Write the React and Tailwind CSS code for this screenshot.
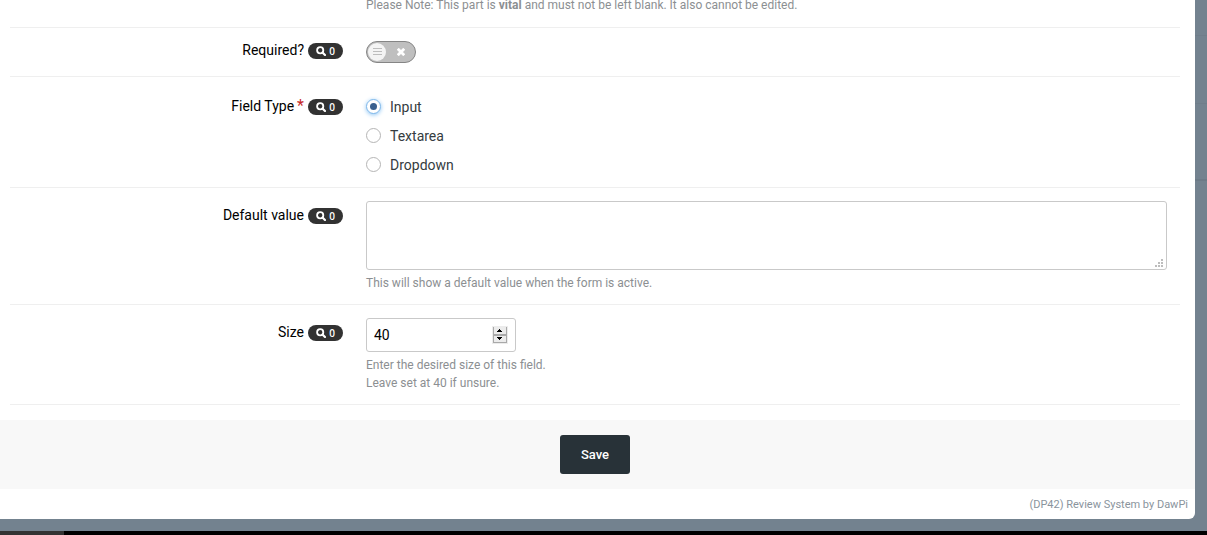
import React, { useState } from 'react';
import clsx from 'clsx';

const FIELD_TYPES = ['Input', 'Textarea', 'Dropdown'];

/**
 * Dark pill with the search icon and the number of matches
 */
const SearchBadge = ({ count = 0 }) => (
    <span className="mt-[3px] flex h-4 w-[35px] items-center justify-center gap-[3px] rounded-full bg-[#323232] text-white">
        <svg className="h-2.5 w-2.5" viewBox="0 0 10 10" fill="none" stroke="currentColor" strokeWidth="1.8">
            <circle cx="4.2" cy="4.2" r="3.1" />
            <path d="M6.5 6.5 9 9" strokeWidth="2.2" strokeLinecap="round" />
        </svg>
        <span className="font-[Open_Sans,sans-serif] text-[10px] leading-4 font-semibold">{count}</span>
    </span>
);

const HelpText = ({ children }) => (
    <p className="text-xs leading-[18px] text-[#8c8f92]">{children}</p>
);

/**
 * One line of the form
 *
 * @param {Object} props
 * @param {string} props.label - Field label
 * @param {string} props.htmlFor - Id of the labelled control
 * @param {boolean} props.required - Shows the red asterisk
 * @param {string} props.labelClassName - Top padding of the label
 * @param {string} props.className - Padding of the row content
 */
const FormRow = ({ label, htmlFor, id, required = false, labelClassName, className, children }) => {
    const Tag = htmlFor ? 'label' : 'span';

    return (
        <div className="flex gap-[23px] border-b border-[#efefef]">
            <div className={clsx('flex w-[333px] shrink-0 items-start justify-end gap-1', labelClassName)}>
                {label && (
                    <>
                        <Tag htmlFor={htmlFor} id={id} className="flex gap-[3px] text-sm leading-5 text-black">
                            {label}
                            {required && <span className="text-base leading-5 text-[#c62828]">*</span>}
                        </Tag>
                        <SearchBadge />
                    </>
                )}
            </div>
            <div className={clsx('min-w-0 flex-1 pr-[13px]', className)}>{children}</div>
        </div>
    );
};

const Toggle = ({ id, checked, onChange }) => (
    <div className="relative h-[22px] w-[50px]">
        <input
            id={id}
            type="checkbox"
            role="switch"
            checked={checked}
            onChange={onChange}
            className="block h-full w-full appearance-none rounded-full border border-[#858585] bg-[#bfbfbf] checked:bg-[#5d8a3a]"
        />
        <span
            className={clsx(
                'pointer-events-none absolute top-0.5 flex h-[18px] w-[18px] items-center justify-center rounded-full bg-[#f4f4f4]',
                checked ? 'right-0.5' : 'left-0.5'
            )}
        >
            <svg className="h-2 w-[9px]" viewBox="0 0 9 8" stroke="#bdbdbd">
                <path d="M0 .5h9M0 3.5h9M0 6.5h9" />
            </svg>
        </span>
        {!checked && (
            <svg
                className="pointer-events-none absolute top-[7px] left-[31px] h-2 w-2"
                viewBox="0 0 8 8"
                stroke="#fff"
                strokeWidth="2.8"
            >
                <path d="M.8 .8l6.4 6.4M7.2 .8.8 7.2" />
            </svg>
        )}
    </div>
);

const App = () => {
    const [required, setRequired] = useState(false);
    const [fieldType, setFieldType] = useState('Input');
    const [defaultValue, setDefaultValue] = useState('');
    const [size, setSize] = useState(40);

    return (
        <div className="flex min-h-screen flex-col bg-[#73828f] font-[Roboto,sans-serif]">
            <div className="flex">
                <form
                    className="min-w-0 flex-1 overflow-hidden rounded-br-md bg-white"
                    onSubmit={(e) => e.preventDefault()}
                >
                    <div className="mr-[15px] mb-[15px] ml-2.5">
                        <FormRow className="flex h-[27px] flex-col justify-end pb-[13px]">
                            <HelpText>
                                Please Note: This part is <b>vital</b> and must not be left blank. It also cannot be
                                edited.
                            </HelpText>
                        </FormRow>

                        <FormRow label="Required?" htmlFor="required" labelClassName="pt-3" className="py-[13px]">
                            <Toggle id="required" checked={required} onChange={(e) => setRequired(e.target.checked)} />
                        </FormRow>

                        <FormRow
                            label="Field Type"
                            id="field-type"
                            required
                            labelClassName="pt-[19px]"
                            className="pt-[15px] pb-2"
                        >
                            <div role="radiogroup" aria-labelledby="field-type">
                                {FIELD_TYPES.map((type) => (
                                    <label
                                        key={type}
                                        className="flex h-[29px] items-center gap-[9px] text-sm text-[#353c41]"
                                    >
                                        <input
                                            type="radio"
                                            name="field_type"
                                            value={type}
                                            checked={fieldType === type}
                                            onChange={() => setFieldType(type)}
                                            className="flex h-[15px] w-[15px] appearance-none items-center justify-center rounded-full border border-[#b5b5b5] bg-white checked:border-[#7fb8ea] checked:shadow-[0_1px_4px_#8cc4f4] checked:before:h-[7px] checked:before:w-[7px] checked:before:rounded-full checked:before:bg-[#3a608f]"
                                        />
                                        {type}
                                    </label>
                                ))}
                            </div>
                        </FormRow>

                        <FormRow
                            label="Default value"
                            htmlFor="default-value"
                            labelClassName="pt-[17px]"
                            className="pt-[13px] pb-3"
                        >
                            <div className="relative mb-1">
                                <textarea
                                    id="default-value"
                                    value={defaultValue}
                                    onChange={(e) => setDefaultValue(e.target.value)}
                                    className="block h-[69px] w-full resize-none rounded-[3px] border border-[#c9c9c9] bg-white px-2 py-1.5 text-sm text-black"
                                />
                                <svg
                                    className="pointer-events-none absolute right-1 bottom-[3px] h-2 w-2"
                                    viewBox="0 0 8 8"
                                    fill="#bdbdbd"
                                >
                                    <path d="M6 0h2v2H6zM3 3h2v2H3zM6 3h2v2H6zM0 6h2v2H0zM3 6h2v2H3zM6 6h2v2H6z" />
                                </svg>
                            </div>
                            <HelpText>This will show a default value when the form is active.</HelpText>
                        </FormRow>

                        <FormRow label="Size" htmlFor="size" labelClassName="pt-[17px]" className="pt-[13px] pb-3">
                            <div className="relative mb-1 w-[150px]">
                                <input
                                    id="size"
                                    type="number"
                                    value={size}
                                    onChange={(e) => setSize(Number(e.target.value))}
                                    className="block h-[34px] w-full appearance-none rounded-[3px] border border-[#c9c9c9] bg-white px-[7px] text-sm text-black [&::-webkit-inner-spin-button]:appearance-none"
                                />
                                <div className="absolute top-2 right-2 flex h-[18px] w-4 flex-col border border-[#ececec]">
                                    <button
                                        type="button"
                                        aria-label="Increase"
                                        onClick={() => setSize(size + 1)}
                                        className="flex flex-1 items-center justify-center border-x border-b border-[#a9a9a9] bg-[#ececec]"
                                    >
                                        <svg className="h-[3px] w-1.5" viewBox="0 0 6 3">
                                            <path d="M2 0h1v1h1v1h1v1H0V2h1V1h1z" />
                                        </svg>
                                    </button>
                                    <button
                                        type="button"
                                        aria-label="Decrease"
                                        onClick={() => setSize(size - 1)}
                                        className="flex flex-1 items-center justify-center border border-[#a9a9a9] bg-[#ececec]"
                                    >
                                        <svg className="h-[3px] w-1.5" viewBox="0 0 6 3">
                                            <path d="M0 0h5v1H4v1H3v1H2V2H1V1H0z" />
                                        </svg>
                                    </button>
                                </div>
                            </div>
                            <HelpText>
                                Enter the desired size of this field.
                                <br />
                                Leave set at 40 if unsure.
                            </HelpText>
                        </FormRow>
                    </div>

                    <div className="flex justify-center bg-[#f8f8f8] py-[15px] pr-[15px] pl-2.5">
                        <button
                            type="submit"
                            className="h-[39px] w-[70px] rounded-[3px] bg-[#283238] text-[13px] font-medium text-white"
                        >
                            Save
                        </button>
                    </div>

                    <p className="pt-[7px] pr-[7px] pb-[5px] text-right text-[11px] leading-[18px] text-[#8a949d]">
                        (DP42) Review System by DawPi
                    </p>
                </form>

                {/* strip of the dimmed page behind the dialog */}
                <div className="w-3 shrink-0">
                    <div className="h-9 border-b border-[#6f7d8a]" />
                    <div className="h-[68px] border-b border-[#6f7d8a]" />
                    <div className="h-[77px] border-b-2 border-[#6c7a87]" />
                </div>
            </div>

            <div className="mt-auto h-1 bg-black">
                <div className="h-full w-16 bg-[#333333]" />
            </div>
        </div>
    );
};

export default App;
